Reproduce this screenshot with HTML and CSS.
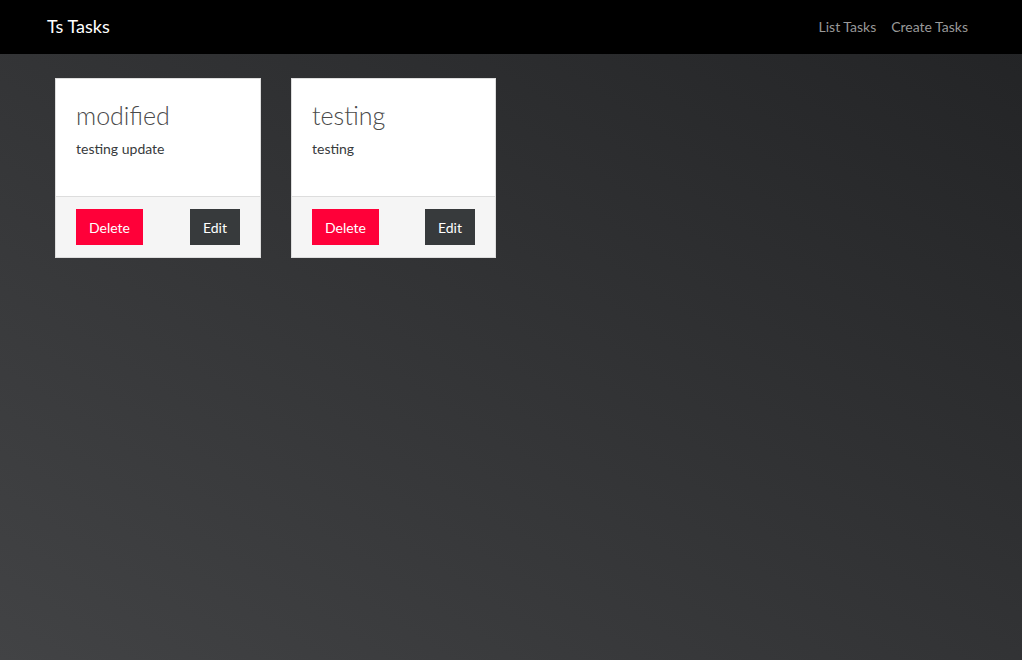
FILE: index.html
```html
<!DOCTYPE html>
<html>
<head>
<meta charset="utf-8">
<link rel="stylesheet" href="styles.css">
</head>
<body>
<nav class="navbar">
  <a class="brand" href="#">Ts Tasks</a>
  <div class="nav-links">
    <a href="#">List Tasks</a>
    <a href="#">Create Tasks</a>
  </div>
</nav>
<main class="content">
  <div class="card">
    <div class="card-body">
      <h3 class="card-title">modified</h3>
      <p class="card-text">testing update</p>
    </div>
    <div class="card-footer">
      <button class="btn btn-danger">Delete</button>
      <button class="btn btn-dark">Edit</button>
    </div>
  </div>
  <div class="card">
    <div class="card-body">
      <h3 class="card-title">testing</h3>
      <p class="card-text">testing</p>
    </div>
    <div class="card-footer">
      <button class="btn btn-danger">Delete</button>
      <button class="btn btn-dark">Edit</button>
    </div>
  </div>
</main>
</body>
</html>
```
FILE: styles.css
```css
* { box-sizing: border-box; }
html, body { height: 100%; }
body {
  margin: 0;
  font-family: "Lato", "Open Sans", sans-serif;
  font-size: 15px;
  color: #373a3c;
  background: linear-gradient(to top right, #424345, #222325);
  min-height: 100vh;
}
.navbar {
  height: 54px;
  background: #000;
  display: flex;
  align-items: center;
  justify-content: space-between;
  padding: 0 54px 2px 47px;
}
.brand {
  color: #fff;
  text-decoration: none;
  font-size: 18px;
}
.nav-links {
  display: flex;
  gap: 15px;
}
.nav-links a {
  color: #999;
  text-decoration: none;
  font-size: 14px;
}
.content {
  display: flex;
  gap: 30px;
  padding: 24px 55px;
  align-items: flex-start;
}
.card {
  width: 206px;
  background: #fff;
  border: 1px solid #ddd;
}
.card + .card { width: 205px; }
.card-body {
  padding: 20px 20px 22px;
  height: 117px;
}
.card-title {
  margin: 0 0 8px;
  font-size: 25px;
  font-weight: 300;
  line-height: 32px;
  color: #4a4a4a;
}
.card-text {
  margin: 0;
  font-size: 14px;
  line-height: 20px;
}
.card-footer {
  background: #f5f5f5;
  border-top: 1px solid #ddd;
  padding: 12px 20px;
  display: flex;
  justify-content: space-between;
}
.btn {
  border: 0;
  border-radius: 0;
  height: 36px;
  padding: 0 13px;
  font-family: inherit;
  font-size: 14px;
  color: #fff;
  cursor: pointer;
}
.btn-danger { background: #ff0039; }
.btn-dark { background: #373a3c; }
```
